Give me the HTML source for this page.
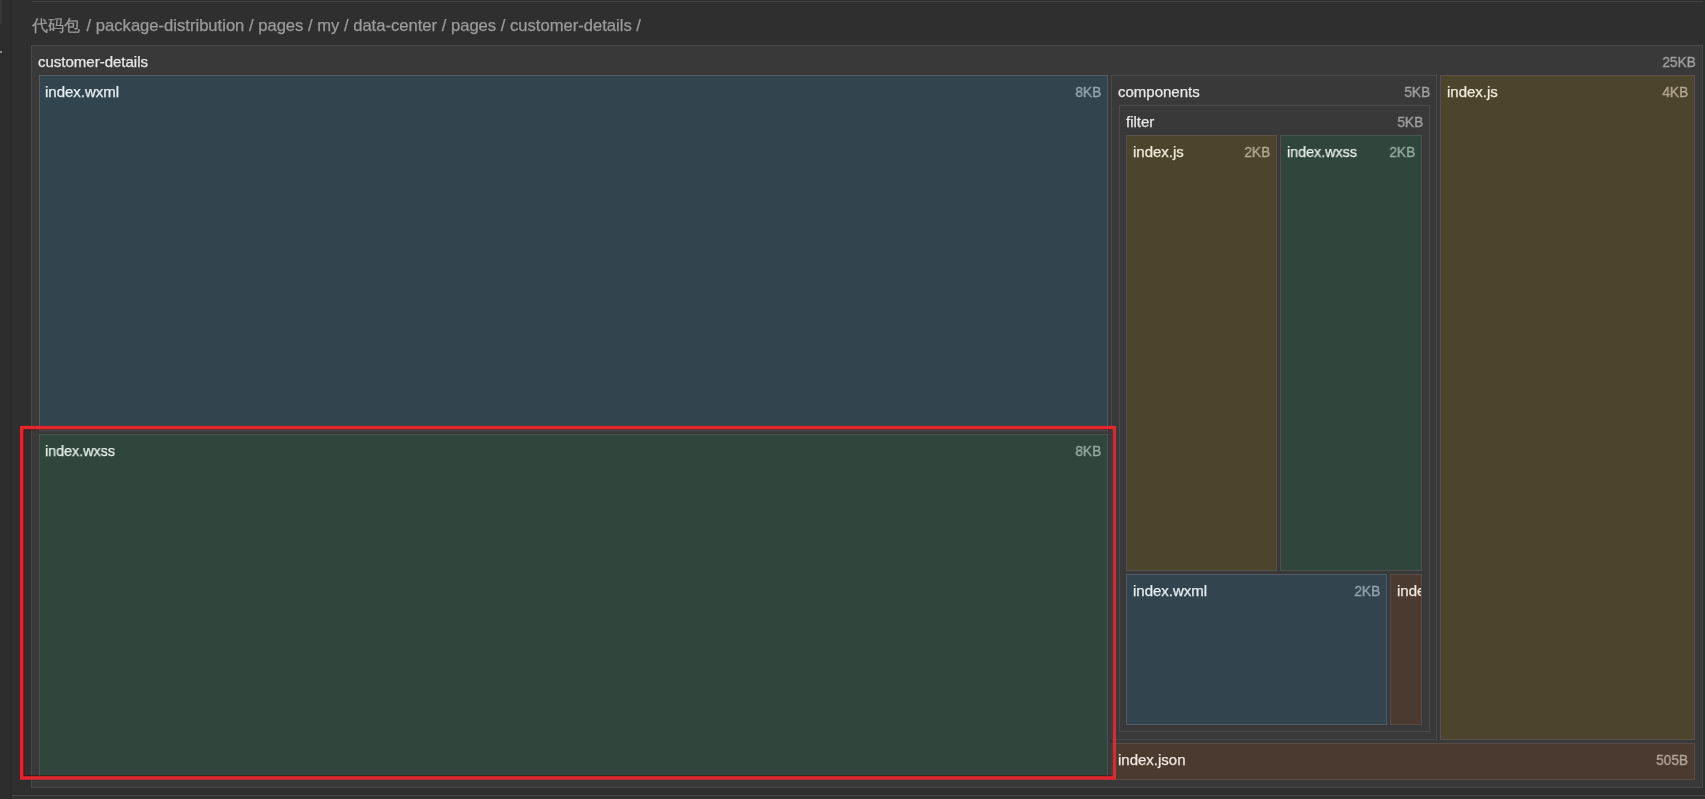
<!DOCTYPE html>
<html><head><meta charset="utf-8">
<style>
html,body{margin:0;padding:0;}
body{width:1705px;height:799px;background:#2f2f2f;position:relative;overflow:hidden;font-family:"Liberation Sans",sans-serif;}
.b{position:absolute;box-sizing:border-box;border:1px solid #494949;background:#393939;overflow:hidden;}
.t,.s{will-change:transform;-webkit-text-stroke:0.25px currentColor;}
.s{-webkit-text-stroke:0.35px currentColor;}
.t{position:absolute;left:6px;top:6px;font-size:15px;line-height:20px;color:#e8e8e8;white-space:nowrap;}
.s{position:absolute;right:6px;top:6px;font-size:15.5px;line-height:20px;color:#a2a2a2;white-space:nowrap;transform:scaleX(0.885);transform-origin:100% 50%;}
.blue{background:#32454e;border-color:#515b61;}
.blue .t{color:#e6eef2}
.blue .s{color:#95a6b0}
.green{background:#30453b;border-color:#4a524e;}
.green .t{color:#e6f0ea}
.green .s{color:#96aca0}
.olive{background:#4d442e;border-color:#58504a;}
.olive .t{color:#f0ead8}
.olive .s{color:#b3aa90}
.rust{background:#4a3a30;border-color:#584c46;}
.rust .t{color:#f2e8e0}
.rust .s{color:#b4a498}
#crumb{will-change:transform;-webkit-text-stroke:0.25px currentColor;position:absolute;left:32px;top:15px;font-size:16.6px;line-height:22px;color:#9b9b9b;white-space:nowrap;}
#topline{position:absolute;left:32px;top:1px;width:1671px;height:1px;background:#444;}
#red{position:absolute;left:20px;top:426px;width:1096px;height:353px;box-sizing:border-box;border:3px solid #e3242b;}
</style></head><body>
<div id="topline"></div>
<div style="position:absolute;left:0;top:0;width:2px;height:24px;background:#383838"></div>
<div style="position:absolute;left:0;top:0;width:10px;height:799px;background:#2d2d2d"></div>
<div style="position:absolute;left:0;top:0;width:2px;height:24px;background:#373737"></div>
<div style="position:absolute;left:10px;top:0;width:2px;height:799px;background:#2a2a2a"></div>
<div style="position:absolute;left:0;top:51px;width:2px;height:2px;background:#8a8a8a"></div>
<div style="position:absolute;left:12px;top:795px;width:1693px;height:1px;background:#464646"></div>
<div style="position:absolute;left:12px;top:796px;width:1693px;height:3px;background:#333"></div>
<div id="crumb"><span style="font-size:16px;margin-right:2px">代码包</span> / package-distribution / pages / my / data-center / pages / customer-details /</div>

<div class="b" style="left:31px;top:45px;width:1672px;height:743px;"><span class="t">customer-details</span><span class="s">25KB</span></div>
<div class="b blue" style="left:39px;top:75px;width:1069px;height:356px;"><span class="t" style="left:5px">index.wxml</span><span class="s">8KB</span></div>
<div class="b green" style="left:39px;top:434px;width:1069px;height:346px;"><span class="t" style="left:5px;transform:scaleX(0.955);transform-origin:0 50%">index.wxss</span><span class="s">8KB</span></div>
<div class="b" style="left:1111px;top:75px;width:326px;height:665px;"><span class="t">components</span><span class="s">5KB</span></div>
<div class="b" style="left:1119px;top:105px;width:311px;height:627px;"><span class="t">filter</span><span class="s">5KB</span></div>
<div class="b olive" style="left:1126px;top:135px;width:151px;height:436px;"><span class="t">index.js</span><span class="s">2KB</span></div>
<div class="b green" style="left:1280px;top:135px;width:142px;height:436px;"><span class="t" style="transform:scaleX(0.955);transform-origin:0 50%">index.wxss</span><span class="s">2KB</span></div>
<div class="b blue" style="left:1126px;top:574px;width:261px;height:151px;"><span class="t">index.wxml</span><span class="s">2KB</span></div>
<div class="b rust" style="left:1390px;top:574px;width:32px;height:151px;"><span class="t">index.json</span></div>
<div class="b olive" style="left:1440px;top:75px;width:255px;height:665px;"><span class="t">index.js</span><span class="s">4KB</span></div>
<div class="b rust" style="left:1111px;top:743px;width:584px;height:37px;"><span class="t">index.json</span><span class="s">505B</span></div>
<svg style="position:absolute;left:0;top:0" width="1705" height="799"><rect x="21.75" y="427.6" width="1092.5" height="350.3" fill="none" stroke="#e3252d" stroke-width="3.5"/><rect x="24" y="429.8" width="1088" height="345.9" fill="none" stroke="rgba(70,0,0,0.45)" stroke-width="1"/></svg>
</body></html>
